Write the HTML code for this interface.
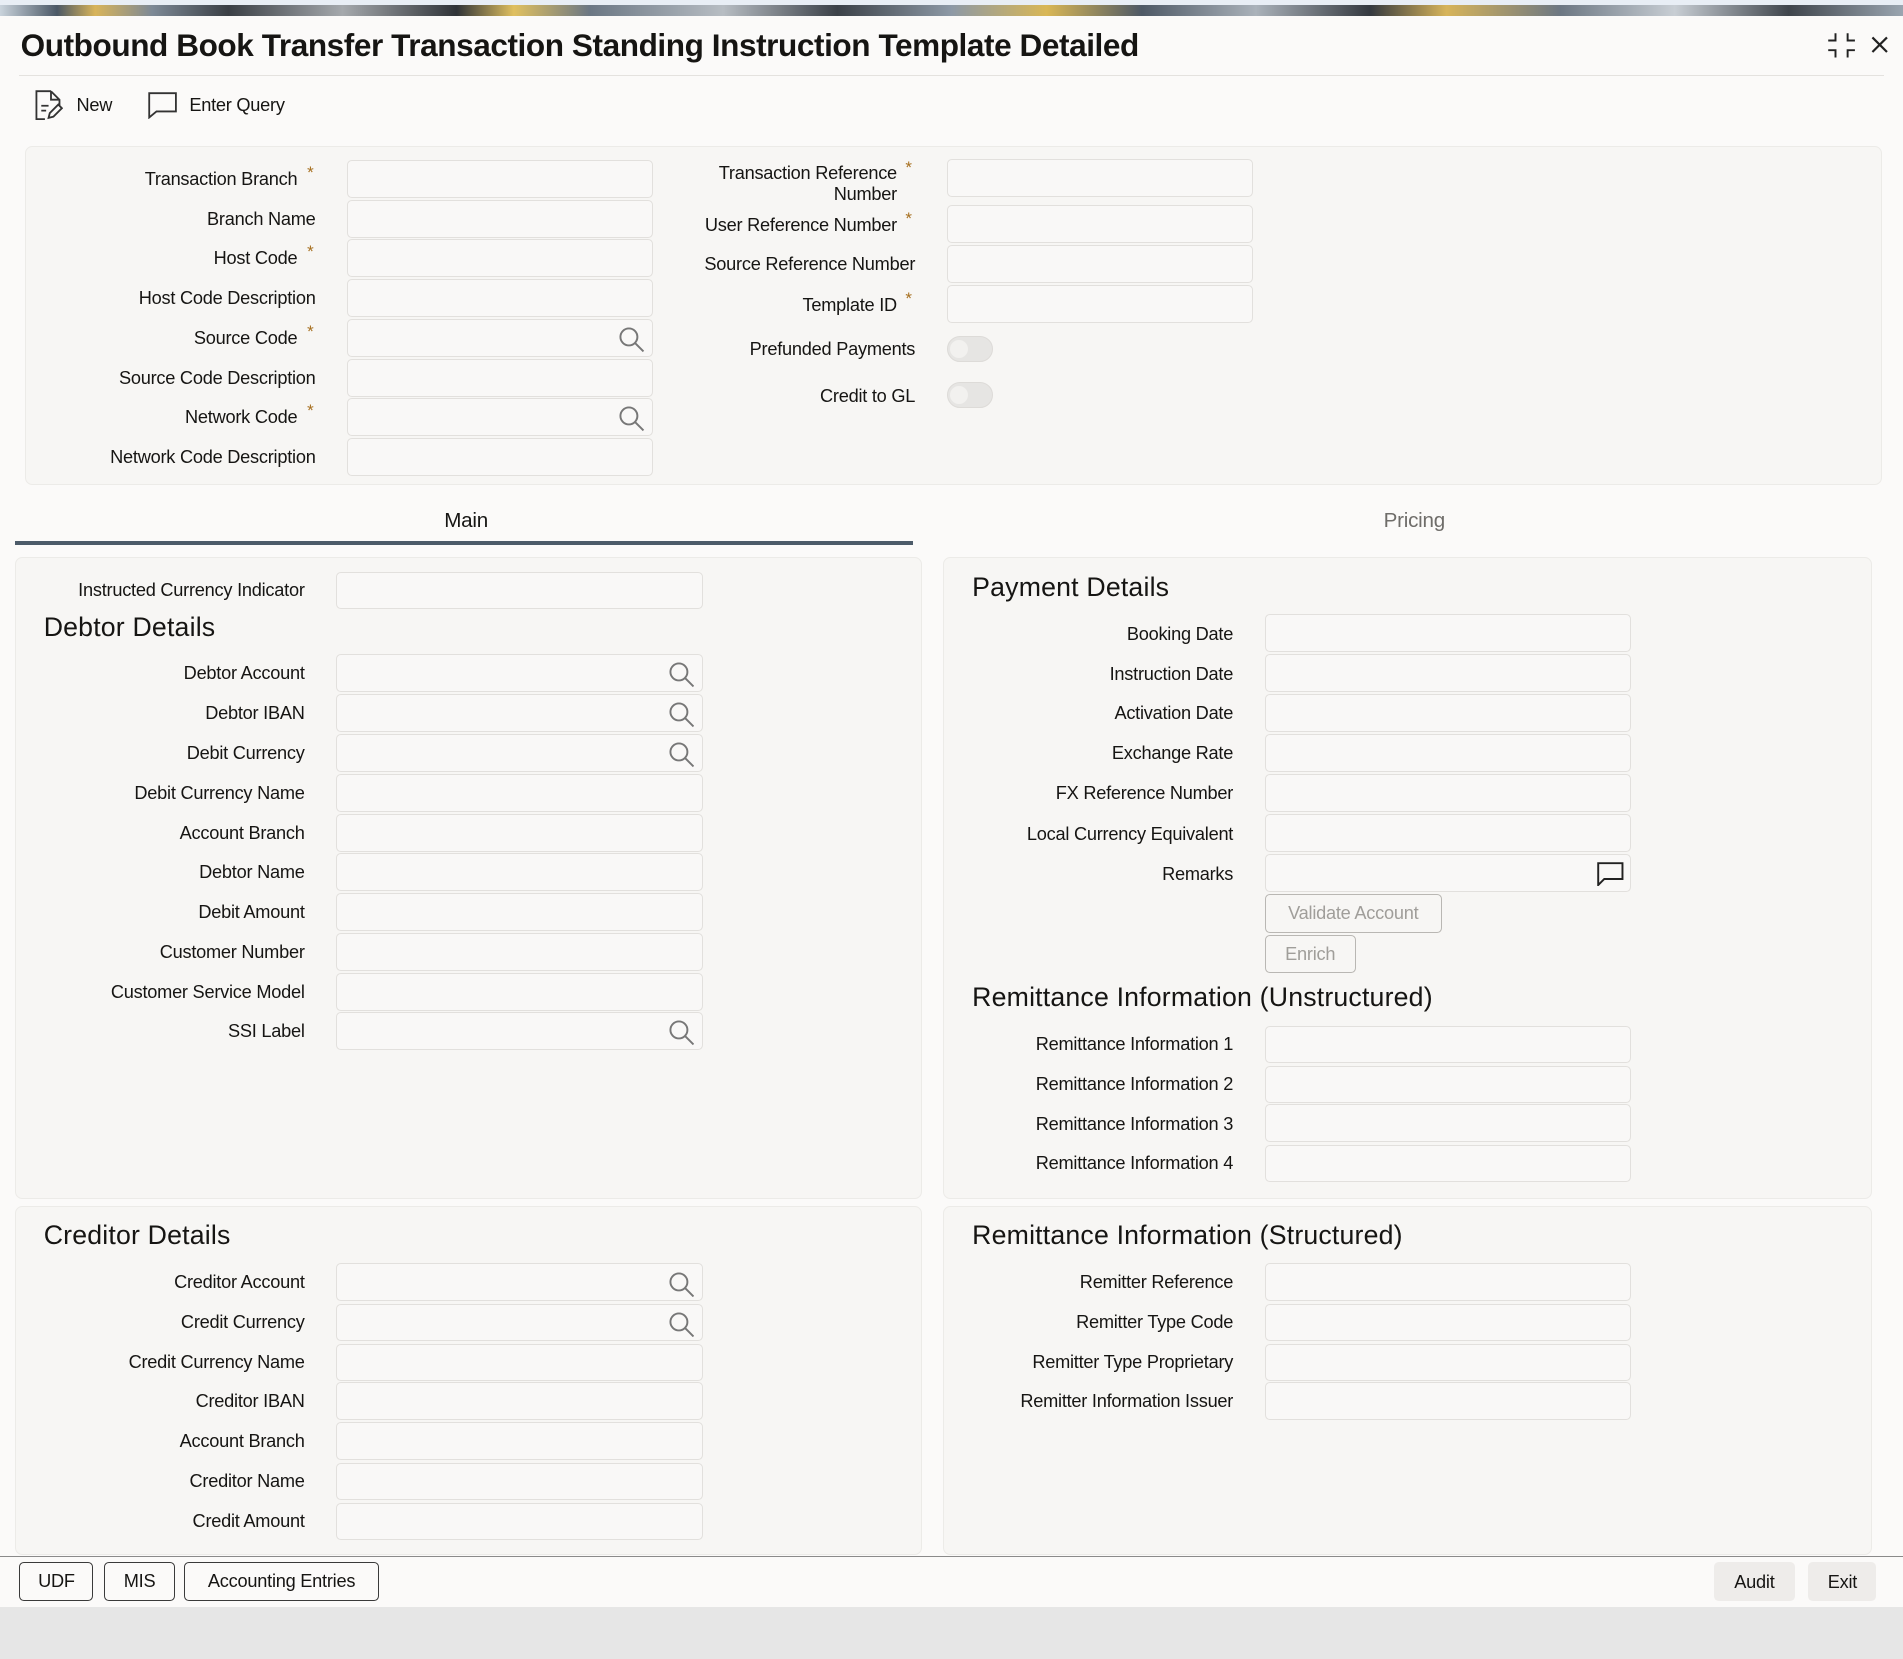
<!DOCTYPE html>
<html><head><meta charset="utf-8">
<style>
*{box-sizing:border-box;margin:0;padding:0}
html,body{width:1903px;height:1659px;overflow:hidden;background:#e6e6e6}
#w{zoom:1.2137;position:relative;width:1568px;height:1367px;background:#e6e6e6;font-family:"Liberation Sans",sans-serif;color:#161513;letter-spacing:-0.2px}
#pg{position:absolute;left:0;top:0;width:1568px;height:1324px;background:#fbfaf9}
.band{position:absolute;left:0;top:0;width:1568px;height:13px;background:linear-gradient(90deg,#c9d3dc 0,#4b5866 3%,#d8b45a 5%,#7d8996 8%,#3a3f45 12%,#a5a9ad 18%,#2f3338 24%,#e0c060 27%,#6b7784 31%,#b7bdc3 38%,#3b4148 44%,#8d99a6 50%,#d9b756 55%,#4e5966 60%,#aab2ba 66%,#343940 72%,#d7b45a 76%,#6c7783 82%,#c8ced4 88%,#3f454c 94%,#9aa5b0 100%)}
.band:before{content:"";position:absolute;left:0;top:0;right:0;height:4px;background:#e8eef5}
.t{position:absolute;left:17px;top:22px;font-size:26px;font-weight:bold;letter-spacing:-0.35px}
.hr{position:absolute;left:16px;right:16px;top:62px;border-top:1px solid #e4e2df}
.tb{position:absolute;top:78px;font-size:15px}
.box{position:absolute;background:#f7f6f4;border:1px solid #ecebe8;border-radius:6px}
.l{position:absolute;font-size:15px;text-align:right;white-space:nowrap;line-height:18px;margin-top:1px}
.i{position:absolute;height:31px;border:1px solid #e2e0dd;border-radius:4px;background:#f9f8f7}
.s{position:absolute;right:6px;top:5px}
.st{color:#a66f1f;font-size:14px;position:absolute;top:-6px}
h2{position:absolute;font-weight:normal;font-size:22px;letter-spacing:0.15px;margin-top:1px}
.tg{position:absolute;width:38px;height:21px;border-radius:11px;background:#e6e5e3;border:1px solid #dddbd8}
.tg:after{content:"";position:absolute;left:2px;top:2px;width:15px;height:15px;border-radius:8px;background:#f2f1ef}
.b{position:absolute;border:1px solid #b9b7b3;border-radius:4px;color:#a09e9a;font-size:15px;text-align:center;line-height:30px;height:32px}
.fb{position:absolute;top:1287px;height:32px;border:1px solid #3a3a3a;border-radius:4px;font-size:15px;text-align:center;line-height:31px}
.gb{position:absolute;top:1287px;height:32px;background:#eeecea;border-radius:4px;font-size:15px;text-align:center;line-height:33px}
</style></head><body><div id="w"><div id="pg">
<div class="band"></div>
<div class="t">Outbound Book Transfer Transaction Standing Instruction Template Detailed</div>
<svg style="position:absolute;left:1505px;top:26px" width="24" height="22" viewBox="0 0 24 22" fill="none" stroke="#222" stroke-width="1.6"><path d="M7 1v6H1M17 1v6h6M7 21v-6H1M17 21v-6h6"/></svg>
<svg style="position:absolute;left:1541px;top:29px" width="16" height="16" viewBox="0 0 16 16" stroke="#222" stroke-width="1.8"><path d="M2 2l12 12M14 2L2 14"/></svg>
<div class="hr"></div>
<svg style="position:absolute;left:28px;top:74px" width="24" height="26" viewBox="0 0 24 26" fill="none" stroke="#333" stroke-width="1.5"><path d="M14 1H2v23h7M14 1l7 7v5M14 1v7h7M6 13h6M6 17h4M12 23l1-4 7-7 3 3-7 7z"/></svg>
<div class="tb" style="left:63px">New</div>
<svg style="position:absolute;left:122px;top:76px" width="24" height="22" viewBox="0 0 24 22" fill="none" stroke="#333" stroke-width="1.5"><path d="M1 1h22v15H7l-6 5z"/></svg>
<div class="tb" style="left:156px">Enter Query</div>

<div class="box" style="left:21px;top:120px;width:1530px;height:280px"></div>
<div class="l" style="right:1323px;top:138px">Transaction Branch</div><span class="st" style="left:253px;top:134px;position:absolute">*</span>
<div class="l" style="right:1308px;top:171px">Branch Name</div>
<div class="l" style="right:1323px;top:203px">Host Code</div><span class="st" style="left:253px;top:199px">*</span>
<div class="l" style="right:1308px;top:236px">Host Code Description</div>
<div class="l" style="right:1323px;top:269px">Source Code</div><span class="st" style="left:253px;top:265px">*</span>
<div class="l" style="right:1308px;top:302px">Source Code Description</div>
<div class="l" style="right:1323px;top:334px">Network Code</div><span class="st" style="left:253px;top:330px">*</span>
<div class="l" style="right:1308px;top:367px">Network Code Description</div>
<div class="i" style="left:286px;top:132px;width:252px"></div>
<div class="i" style="left:286px;top:165px;width:252px"></div>
<div class="i" style="left:286px;top:197px;width:252px"></div>
<div class="i" style="left:286px;top:230px;width:252px"></div>
<div class="i" style="left:286px;top:263px;width:252px"><svg class="s" width="22" height="22" viewBox="0 0 22 22" fill="none" stroke="#777" stroke-width="1.6"><circle cx="9" cy="9" r="7"/><path d="M14 14l7 7"/></svg></div>
<div class="i" style="left:286px;top:296px;width:252px"></div>
<div class="i" style="left:286px;top:328px;width:252px"><svg class="s" width="22" height="22" viewBox="0 0 22 22" fill="none" stroke="#777" stroke-width="1.6"><circle cx="9" cy="9" r="7"/><path d="M14 14l7 7"/></svg></div>
<div class="i" style="left:286px;top:361px;width:252px"></div>
<div class="l" style="right:829px;top:133px">Transaction Reference<br>Number</div><span class="st" style="left:746px;top:130px">*</span>
<div class="l" style="right:829px;top:176px">User Reference Number</div><span class="st" style="left:746px;top:172px">*</span>
<div class="l" style="right:814px;top:208px">Source Reference Number</div>
<div class="l" style="right:829px;top:242px">Template ID</div><span class="st" style="left:746px;top:238px">*</span>
<div class="l" style="right:814px;top:278px">Prefunded Payments</div>
<div class="l" style="right:814px;top:317px">Credit to GL</div>
<div class="i" style="left:780px;top:131px;width:252px"></div>
<div class="i" style="left:780px;top:169px;width:252px"></div>
<div class="i" style="left:780px;top:202px;width:252px"></div>
<div class="i" style="left:780px;top:235px;width:252px"></div>
<div class="tg" style="left:780px;top:277px"></div>
<div class="tg" style="left:780px;top:315px"></div>

<div style="position:absolute;left:366px;top:419px;font-size:17px">Main</div>
<div style="position:absolute;left:1140px;top:419px;font-size:17px;color:#6f6d6a">Pricing</div>
<div style="position:absolute;left:12px;top:446px;width:740px;height:3px;background:#4c5b69"></div>

<div class="box" style="left:12px;top:459px;width:748px;height:529px"></div>
<div class="box" style="left:777px;top:459px;width:765px;height:529px"></div>
<div class="box" style="left:12px;top:994px;width:748px;height:287px"></div>
<div class="box" style="left:777px;top:994px;width:765px;height:287px"></div>

<div class="l" style="right:1317px;top:477px">Instructed Currency Indicator</div>
<div class="i" style="left:277px;top:471px;width:302px"></div>
<h2 style="left:36px;top:503px">Debtor Details</h2>
<div class="l" style="right:1317px;top:545px">Debtor Account</div>
<div class="l" style="right:1317px;top:578px">Debtor IBAN</div>
<div class="l" style="right:1317px;top:611px">Debit Currency</div>
<div class="l" style="right:1317px;top:644px">Debit Currency Name</div>
<div class="l" style="right:1317px;top:677px">Account Branch</div>
<div class="l" style="right:1317px;top:709px">Debtor Name</div>
<div class="l" style="right:1317px;top:742px">Debit Amount</div>
<div class="l" style="right:1317px;top:775px">Customer Number</div>
<div class="l" style="right:1317px;top:808px">Customer Service Model</div>
<div class="l" style="right:1317px;top:840px">SSI Label</div>
<div class="i" style="left:277px;top:539px;width:302px"><svg class="s" width="22" height="22" viewBox="0 0 22 22" fill="none" stroke="#777" stroke-width="1.6"><circle cx="9" cy="9" r="7"/><path d="M14 14l7 7"/></svg></div>
<div class="i" style="left:277px;top:572px;width:302px"><svg class="s" width="22" height="22" viewBox="0 0 22 22" fill="none" stroke="#777" stroke-width="1.6"><circle cx="9" cy="9" r="7"/><path d="M14 14l7 7"/></svg></div>
<div class="i" style="left:277px;top:605px;width:302px"><svg class="s" width="22" height="22" viewBox="0 0 22 22" fill="none" stroke="#777" stroke-width="1.6"><circle cx="9" cy="9" r="7"/><path d="M14 14l7 7"/></svg></div>
<div class="i" style="left:277px;top:638px;width:302px"></div>
<div class="i" style="left:277px;top:671px;width:302px"></div>
<div class="i" style="left:277px;top:703px;width:302px"></div>
<div class="i" style="left:277px;top:736px;width:302px"></div>
<div class="i" style="left:277px;top:769px;width:302px"></div>
<div class="i" style="left:277px;top:802px;width:302px"></div>
<div class="i" style="left:277px;top:834px;width:302px"><svg class="s" width="22" height="22" viewBox="0 0 22 22" fill="none" stroke="#777" stroke-width="1.6"><circle cx="9" cy="9" r="7"/><path d="M14 14l7 7"/></svg></div>

<h2 style="left:801px;top:470px">Payment Details</h2>
<div class="l" style="right:552px;top:513px">Booking Date</div>
<div class="l" style="right:552px;top:546px">Instruction Date</div>
<div class="l" style="right:552px;top:578px">Activation Date</div>
<div class="l" style="right:552px;top:611px">Exchange Rate</div>
<div class="l" style="right:552px;top:644px">FX Reference Number</div>
<div class="l" style="right:552px;top:678px">Local Currency Equivalent</div>
<div class="l" style="right:552px;top:711px">Remarks</div>
<div class="i" style="left:1042px;top:506px;width:302px"></div>
<div class="i" style="left:1042px;top:539px;width:302px"></div>
<div class="i" style="left:1042px;top:572px;width:302px"></div>
<div class="i" style="left:1042px;top:605px;width:302px"></div>
<div class="i" style="left:1042px;top:638px;width:302px"></div>
<div class="i" style="left:1042px;top:671px;width:302px"></div>
<div class="i" style="left:1042px;top:704px;width:302px"><svg style="position:absolute;right:5px;top:5px" width="22" height="20" viewBox="0 0 22 20" fill="none" stroke="#222" stroke-width="1.6"><path d="M1 1h20v13H6l-5 5z"/></svg></div>
<div class="b" style="left:1042px;top:737px;width:146px">Validate Account</div>
<div class="b" style="left:1042px;top:770px;width:75px">Enrich</div>
<h2 style="left:801px;top:808px">Remittance Information (Unstructured)</h2>
<div class="l" style="right:552px;top:851px">Remittance Information 1</div>
<div class="l" style="right:552px;top:884px">Remittance Information 2</div>
<div class="l" style="right:552px;top:917px">Remittance Information 3</div>
<div class="l" style="right:552px;top:949px">Remittance Information 4</div>
<div class="i" style="left:1042px;top:845px;width:302px"></div>
<div class="i" style="left:1042px;top:878px;width:302px"></div>
<div class="i" style="left:1042px;top:910px;width:302px"></div>
<div class="i" style="left:1042px;top:943px;width:302px"></div>

<h2 style="left:36px;top:1004px">Creditor Details</h2>
<div class="l" style="right:1317px;top:1047px">Creditor Account</div>
<div class="l" style="right:1317px;top:1080px">Credit Currency</div>
<div class="l" style="right:1317px;top:1113px">Credit Currency Name</div>
<div class="l" style="right:1317px;top:1145px">Creditor IBAN</div>
<div class="l" style="right:1317px;top:1178px">Account Branch</div>
<div class="l" style="right:1317px;top:1211px">Creditor Name</div>
<div class="l" style="right:1317px;top:1244px">Credit Amount</div>
<div class="i" style="left:277px;top:1041px;width:302px"><svg class="s" width="22" height="22" viewBox="0 0 22 22" fill="none" stroke="#777" stroke-width="1.6"><circle cx="9" cy="9" r="7"/><path d="M14 14l7 7"/></svg></div>
<div class="i" style="left:277px;top:1074px;width:302px"><svg class="s" width="22" height="22" viewBox="0 0 22 22" fill="none" stroke="#777" stroke-width="1.6"><circle cx="9" cy="9" r="7"/><path d="M14 14l7 7"/></svg></div>
<div class="i" style="left:277px;top:1107px;width:302px"></div>
<div class="i" style="left:277px;top:1139px;width:302px"></div>
<div class="i" style="left:277px;top:1172px;width:302px"></div>
<div class="i" style="left:277px;top:1205px;width:302px"></div>
<div class="i" style="left:277px;top:1238px;width:302px"></div>

<h2 style="left:801px;top:1004px">Remittance Information (Structured)</h2>
<div class="l" style="right:552px;top:1047px">Remitter Reference</div>
<div class="l" style="right:552px;top:1080px">Remitter Type Code</div>
<div class="l" style="right:552px;top:1113px">Remitter Type Proprietary</div>
<div class="l" style="right:552px;top:1145px">Remitter Information Issuer</div>
<div class="i" style="left:1042px;top:1041px;width:302px"></div>
<div class="i" style="left:1042px;top:1074px;width:302px"></div>
<div class="i" style="left:1042px;top:1107px;width:302px"></div>
<div class="i" style="left:1042px;top:1139px;width:302px"></div>

<div style="position:absolute;left:0;top:1282px;width:1568px;border-top:1px solid #8a8a8a"></div>
<div class="fb" style="left:16px;width:61px">UDF</div>
<div class="fb" style="left:86px;width:58px">MIS</div>
<div class="fb" style="left:152px;width:160px">Accounting Entries</div>
<div class="gb" style="left:1412px;width:67px">Audit</div>
<div class="gb" style="left:1490px;width:56px">Exit</div>
</div></div></body></html>
